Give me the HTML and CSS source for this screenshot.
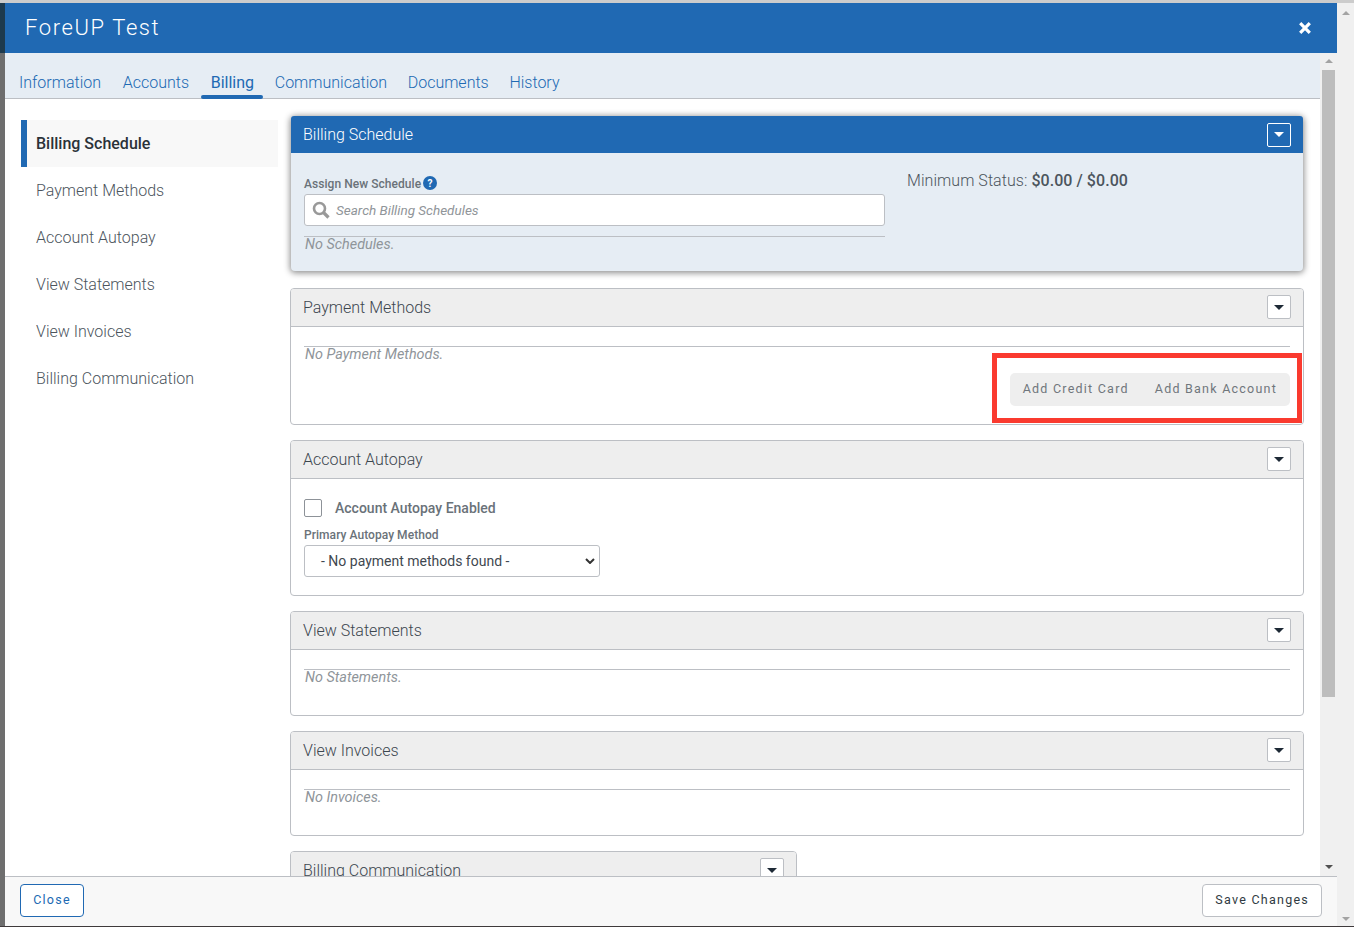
FILE: index.html
```html
<!DOCTYPE html>
<html lang="en">
<head>
    <meta charset="UTF-8">
    <meta name="viewport" content="width=device-width, initial-scale=1.0">
    <title>ForeUP Test</title>
    <link rel="stylesheet" href="styles.css">
</head>
<body>
    <div class="backdrop"></div>
    <div class="modal">
        <header class="modal-header">
            <h1>ForeUP Test</h1>
            <svg class="close-icon" width="14" height="14" viewBox="0 0 14 14"><path d="M2.2 2.2l9.6 9.6M11.8 2.2l-9.6 9.6" stroke="#fff" stroke-width="3.2" fill="none"/></svg>
        </header>
        <div class="modal-main">
            <div class="modal-content">
                <nav class="tabs">
                    <a href="#">Information</a>
                    <a href="#">Accounts</a>
                    <a href="#" class="active">Billing</a>
                    <a href="#">Communication</a>
                    <a href="#">Documents</a>
                    <a href="#">History</a>
                </nav>
                <div class="billing">
                    <ul class="side-nav">
                        <li class="active">Billing Schedule</li>
                        <li>Payment Methods</li>
                        <li>Account Autopay</li>
                        <li>View Statements</li>
                        <li>View Invoices</li>
                        <li>Billing Communication</li>
                    </ul>
                    <div class="panels">
                        <section class="panel panel-primary">
                            <div class="panel-head">
                                <span>Billing Schedule</span>
                                <button class="toggle"><i class="caret"></i></button>
                            </div>
                            <div class="schedule-body">
                                <div class="schedule-left">
                                    <div class="field-label">Assign New Schedule
                                        <svg class="help-icon" width="14" height="14" viewBox="0 0 14 14"><circle cx="7" cy="7" r="7" fill="#2069b3"/><text x="7" y="10.5" text-anchor="middle" class="help-mark">?</text></svg>
                                    </div>
                                    <div class="search">
                                        <svg width="18" height="18" viewBox="0 0 18 18"><circle cx="7.5" cy="7.5" r="5.5" fill="none" stroke="#999" stroke-width="2.6"/><path d="M11.5 11.5l5 5" stroke="#999" stroke-width="3.2"/></svg>
                                        <span>Search Billing Schedules</span>
                                    </div>
                                    <p class="empty">No Schedules.</p>
                                </div>
                                <div class="min-status">Minimum Status: <b>$0.00 / $0.00</b></div>
                            </div>
                        </section>

                        <section class="panel payment-panel">
                            <div class="panel-head">
                                <span>Payment Methods</span>
                                <button class="toggle"><i class="caret"></i></button>
                            </div>
                            <div class="panel-body">
                                <p class="empty">No Payment Methods.</p>
                                <div class="actions">
                                    <div class="btn-group">
                                        <a href="#">Add Credit Card</a>
                                        <a href="#">Add Bank Account</a>
                                    </div>
                                </div>
                            </div>
                            <div class="annotation"></div>
                        </section>

                        <section class="panel">
                            <div class="panel-head">
                                <span>Account Autopay</span>
                                <button class="toggle"><i class="caret"></i></button>
                            </div>
                            <div class="autopay-body">
                                <label class="check-row"><i class="check"></i>Account Autopay Enabled</label>
                                <div class="field-label">Primary Autopay Method</div>
                                <div class="select">
                                    <span>- No payment methods found -</span>
                                    <svg width="10" height="6" viewBox="0 0 10 6"><path d="M1 1l4 4 4-4" fill="none" stroke="#333" stroke-width="2"/></svg>
                                </div>
                            </div>
                        </section>

                        <section class="panel">
                            <div class="panel-head">
                                <span>View Statements</span>
                                <button class="toggle"><i class="caret"></i></button>
                            </div>
                            <div class="panel-body short">
                                <p class="empty">No Statements.</p>
                            </div>
                        </section>

                        <section class="panel">
                            <div class="panel-head">
                                <span>View Invoices</span>
                                <button class="toggle"><i class="caret"></i></button>
                            </div>
                            <div class="panel-body short">
                                <p class="empty">No Invoices.</p>
                            </div>
                        </section>

                        <section class="panel half">
                            <div class="panel-head">
                                <span>Billing Communication</span>
                                <button class="toggle"><i class="caret"></i></button>
                            </div>
                        </section>
                    </div>
                </div>
            </div>
            <div class="scrollbar inner">
                <i class="arrow-up"></i>
                <div class="track"><div class="thumb"></div></div>
                <i class="arrow-down"></i>
            </div>
        </div>
        <footer class="modal-footer">
            <button class="btn-close">Close</button>
            <button class="btn-save">Save Changes</button>
        </footer>
    </div>
    <div class="scrollbar outer">
        <i class="arrow-up"></i>
        <i class="arrow-down"></i>
    </div>
</body>
</html>
```

FILE: styles.css
```css
* {
    box-sizing: border-box;
    margin: 0;
    padding: 0;
}

html, body {
    height: 927px;
    overflow: hidden;
}

body {
    font-family: Roboto, "Liberation Sans", sans-serif;
    color: #212b36;
    display: flex;
    background: #fff;
    border-top: 3px solid #ccc;
    border-bottom: 1px solid #3f3a3c;
}

.backdrop {
    width: 5px;
    background: linear-gradient(#1d3a4e 0, #1d3a4e 50px, #6e6e6e 50px, #6e6e6e 100%);
}

.modal {
    flex: 1;
    display: flex;
    flex-direction: column;
    min-width: 0;
}

.modal-header {
    height: 50px;
    flex: none;
    background: #2069b3;
    color: #fff;
    display: flex;
    align-items: center;
    justify-content: space-between;
    padding: 0 25px 0 20px;
}

.modal-header h1 {
    font-size: 22px;
    font-weight: 300;
    letter-spacing: 1.6px;
    margin-bottom: 2px;
}

.modal-main {
    flex: 1;
    display: flex;
    min-height: 0;
}

.modal-content {
    flex: 1;
    min-width: 0;
    overflow: hidden;
}

.tabs {
    height: 46px;
    background: #e6edf4;
    border-bottom: 1px solid #bcbfc4;
    display: flex;
    align-items: flex-end;
    padding-left: 14px;
}

.tabs a {
    font-size: 16px;
    font-weight: 300;
    color: #2069b3;
    text-decoration: none;
    line-height: 20px;
    padding-bottom: 5px;
    margin-right: 21.7px;
    position: relative;
}

.tabs a:nth-child(n+3) {
    margin-right: 20.7px;
}

.tabs a.active {
    font-weight: 400;
}

.tabs a.active::after {
    content: "";
    position: absolute;
    left: -10px;
    right: -9px;
    bottom: -1px;
    height: 4px;
    background: #2069b3;
    border-radius: 2px;
}

.billing {
    display: flex;
    align-items: flex-start;
    padding: 17px 16px 0 16px;
}

.side-nav {
    list-style: none;
    width: 257px;
    flex: none;
    margin-top: 4px;
    margin-right: 12px;
}

.side-nav li {
    height: 47px;
    line-height: 47px;
    padding-left: 15px;
    font-size: 16px;
    font-weight: 300;
    color: #4c555d;
}

.side-nav li.active {
    background: #f8f8f8;
    border-left: 6px solid #2069b3;
    padding-left: 9px;
    font-weight: 500;
    color: #2b3238;
}

.panels {
    flex: 1;
    min-width: 0;
    display: flex;
    flex-direction: column;
    gap: 15px;
}

.panel {
    border: 1px solid #bcbfc4;
    border-radius: 4px;
    position: relative;
    background: #fff;
}

.panel.half {
    width: 507px;
    height: 60px;
}

.panel-head {
    height: 38px;
    background: #eee;
    border-bottom: 1px solid #bcbfc4;
    border-radius: 3px 3px 0 0;
    display: flex;
    align-items: center;
    justify-content: space-between;
    padding: 0 12px;
    font-size: 16px;
    font-weight: 300;
    color: #3c464e;
}

.toggle {
    width: 24px;
    height: 24px;
    margin-top: -1px;
    background: #fff;
    border: 1px solid #bcbfc4;
    border-radius: 2px;
    display: flex;
    align-items: center;
    justify-content: center;
}

.caret {
    width: 0;
    height: 0;
    border-left: 5px solid transparent;
    border-right: 5px solid transparent;
    border-top: 5px solid #1e2a36;
}

.panel-primary {
    border: none;
    margin: 0 1px 2px;
    background: #e6edf4;
    box-shadow: 0 1px 6px 1px rgba(0, 0, 0, .45);
}

.panel-primary .panel-head {
    height: 37px;
    background: #2069b3;
    color: #fff;
    border-bottom: none;
}

.panel-primary .toggle {
    margin-top: 0;
    background: transparent;
    border-color: #fff;
}

.panel-primary .caret {
    border-top-color: #fff;
}

.schedule-body {
    height: 118px;
    display: flex;
    padding: 22px 13px 0 13px;
}

.schedule-left {
    width: 581px;
    flex: none;
}

.field-label {
    font-size: 12px;
    font-weight: 500;
    letter-spacing: .05px;
    color: #6a7279;
    line-height: 14px;
    display: flex;
    align-items: center;
    gap: 2px;
    height: 18px;
    margin-bottom: 1px;
}

.help-icon {
    margin-top: -3px;
}

.help-mark {
    font-size: 10px;
    font-weight: 700;
    fill: #fff;
}

.search {
    height: 32px;
    margin-bottom: 10px;
    background: #fff;
    border: 1px solid #bcbfc4;
    border-radius: 3px;
    display: flex;
    align-items: center;
    gap: 6px;
    padding-left: 7px;
    font-size: 13.5px;
    font-style: italic;
    color: #909599;
}

.empty {
    border-top: 1px solid #bcbfc4;
    font-size: 14.4px;
    font-style: italic;
    font-weight: 400;
    line-height: 15px;
    color: #8f959a;
    padding-left: 1px;
}

.min-status {
    margin-left: 22px;
    margin-top: -4px;
    font-size: 16px;
    font-weight: 300;
    letter-spacing: .06px;
    color: #4c555d;
}

.min-status b {
    font-weight: 500;
}

.panel-body {
    padding: 19px 13px 18px 13px;
}

.panel-body.short {
    height: 65px;
}

.actions {
    display: flex;
    justify-content: flex-end;
    margin-top: 11px;
}

.btn-group {
    height: 33px;
    background: #eee;
    border-radius: 5px;
    display: flex;
    align-items: center;
    padding: 0 13px 2px;
    gap: 26px;
}

.btn-group a {
    font-size: 12.5px;
    color: #70767c;
    letter-spacing: 1.23px;
    text-decoration: none;
}

.annotation {
    position: absolute;
    left: 701px;
    top: 64px;
    width: 310px;
    height: 70px;
    border: 5px solid #fa3a2f;
    pointer-events: none;
}

.autopay-body {
    height: 116px;
    padding: 19px 13px 0 13px;
}

.check-row {
    display: flex;
    align-items: center;
    font-size: 14px;
    font-weight: 500;
    color: #6a7279;
    height: 20px;
    margin-bottom: 9px;
}

.check {
    width: 18px;
    height: 18px;
    background: #fff;
    border: 1px solid #8d9298;
    border-radius: 2px;
    margin-right: 13px;
}

.autopay-body .field-label {
    height: 15px;
    margin-bottom: 3px;
}

.select {
    width: 296px;
    height: 32px;
    border: 1px solid #bcbfc4;
    border-radius: 3px;
    display: flex;
    align-items: center;
    justify-content: space-between;
    padding: 0 4px 0 16px;
    font-size: 14px;
    color: #3f4850;
}

.modal-footer {
    height: 50px;
    flex: none;
    background: #f8f8f8;
    border-top: 1px solid #bcbfc4;
    display: flex;
    align-items: flex-start;
    justify-content: space-between;
    padding: 7px 15px 0 15px;
}

.modal-footer button {
    height: 33px;
    font-family: inherit;
    font-size: 12.5px;
    letter-spacing: 1.25px;
    border-radius: 4px;
    background: #fff;
    padding: 0 12px 2px;
}

.btn-close {
    width: 64px;
    border: 1px solid #2069b3;
    color: #2069b3;
}

.btn-save {
    border: 1px solid #bcbfc4;
    color: #303a42;
}

.scrollbar {
    width: 17px;
    flex: none;
    background: #f0f0f0;
    position: relative;
}

.scrollbar.inner {
    display: flex;
    flex-direction: column;
    padding-top: 6px;
    padding-bottom: 7px;
    align-items: center;
}

.scrollbar .track {
    flex: 1;
    width: 13px;
    margin: 7px 0;
}

.scrollbar .thumb {
    width: 100%;
    height: 627px;
    background: #bdbdbd;
}

.arrow-up, .arrow-down {
    display: block;
    width: 0;
    height: 0;
    border-left: 4px solid transparent;
    border-right: 4px solid transparent;
}

.arrow-up {
    border-bottom: 4px solid #a3a3a3;
}

.arrow-down {
    border-top: 4px solid #505050;
}

.scrollbar.outer {
    display: flex;
    flex-direction: column;
    justify-content: space-between;
    align-items: center;
    padding: 8px 0 5px;
}

.scrollbar.outer .arrow-down {
    border-top-color: #a3a3a3;
}
```
